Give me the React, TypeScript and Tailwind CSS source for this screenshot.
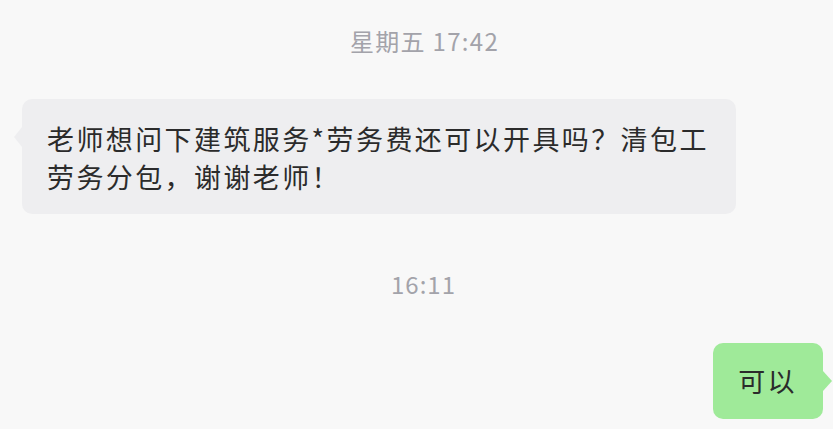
import React from "react";

export default function App() {
    return (
        <div className="w-[833px] h-[429px] overflow-hidden bg-[#f8f8f8] flex flex-col font-['Noto_Sans_CJK_SC',sans-serif]">

            <div className="mt-[27px] h-[28px] leading-[28px] pl-[16px] text-center text-[24px] tracking-[1.3px] text-[#a3a3aa]">
                星期五 17:42
            </div>

            <div className="relative mt-[44px] ml-[22px] w-[714px] rounded-[10px] bg-[#eeeef0] pl-[25px] pr-[10px] pt-[21px] pb-[18px] text-[27px] leading-[38px] tracking-[2.4px] text-[#2b2b2b]">
                <span className="absolute left-[-8px] top-[28px] w-0 h-0 border-y-[10px] border-y-transparent border-r-[8px] border-r-[#eeeef0]" />
                老师想问下建筑服务*劳务费还可以开具吗？清包工<br />
                劳务分包，谢谢老师！
            </div>

            <div className="mt-[56px] h-[28px] leading-[28px] pl-[14px] text-center text-[24px] tracking-[1px] text-[#a3a3aa]">
                16:11
            </div>

            <div className="relative self-end mt-[45px] mr-[10px] rounded-[10px] bg-[#9fea99] pl-[25px] pr-[26px] py-[19px] text-[27px] leading-[38px] tracking-[2.4px] text-[#2b2b2b]">
                可以
                <span className="absolute right-[-9px] top-[28px] w-0 h-0 border-y-[10px] border-y-transparent border-l-[9px] border-l-[#9fea99]" />
            </div>
        </div>
    );
}
